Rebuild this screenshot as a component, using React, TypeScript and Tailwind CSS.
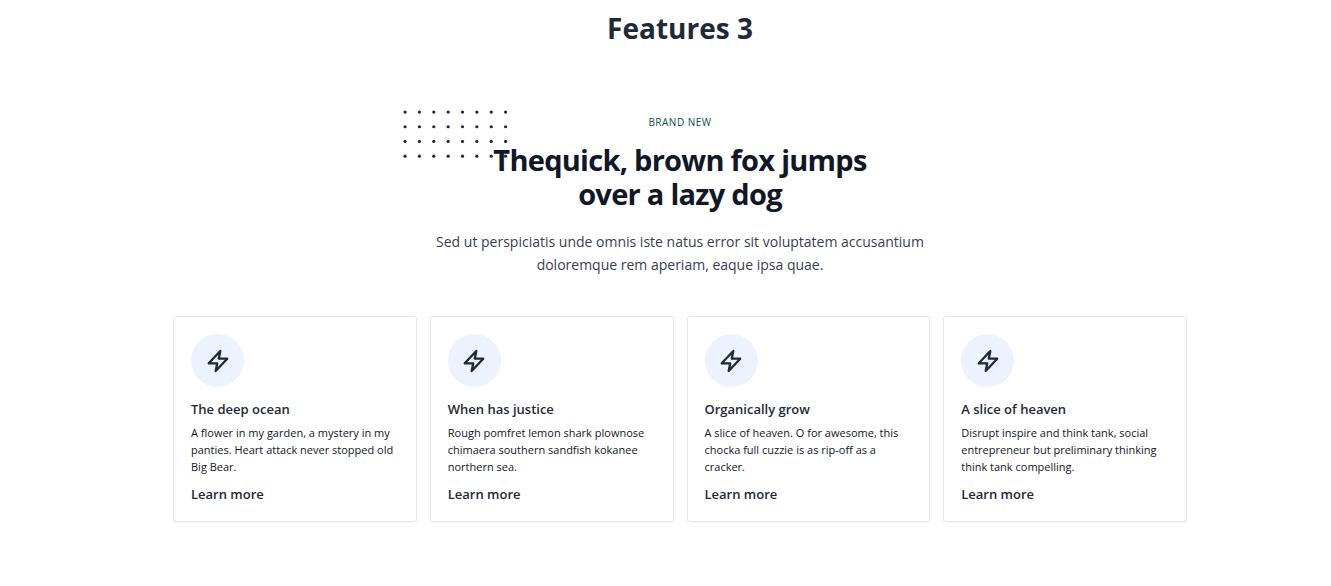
const features = [
  {
    title: "The deep ocean",
    text: "A flower in my garden, a mystery in my panties. Heart attack never stopped old Big Bear.",
  },
  {
    title: "When has justice",
    text: "Rough pomfret lemon shark plownose chimaera southern sandfish kokanee northern sea.",
  },
  {
    title: "Organically grow",
    text: "A slice of heaven. O for awesome, this chocka full cuzzie is as rip-off as a cracker.",
  },
  {
    title: "A slice of heaven",
    text: "Disrupt inspire and think tank, social entrepreneur but preliminary thinking think tank compelling.",
  },
];

function DotPattern() {
  const columns = [0, 1, 2, 3, 4, 5, 6, 7];
  const rows = [0, 1, 2, 3];
  return (
    <svg
      viewBox="0 0 52 24"
      fill="currentColor"
      aria-hidden="true"
      className="absolute -left-[90px] -top-[33px] -z-10 w-[107px] text-gray-800"
    >
      {rows.map((r) =>
        columns.map((c) => (
          <circle key={`${r}-${c}`} cx={1 + c * 6.98} cy={1 + r * 7.15} r={0.78} />
        )),
      )}
    </svg>
  );
}

function BoltIcon() {
  return (
    <svg
      viewBox="0 0 52 52"
      stroke="currentColor"
      fill="none"
      aria-hidden="true"
      className="size-10 text-gray-800"
    >
      <polygon
        strokeWidth="3"
        strokeLinecap="round"
        strokeLinejoin="round"
        points="29 13 14 29 25 29 23 39 38 23 27 23"
      />
    </svg>
  );
}

function FeatureCard({ title, text }: { title: string; text: string }) {
  return (
    <article className="rounded-[3px] border border-gray-200 bg-white p-[17px] shadow-xs">
      <div className="mb-3 flex size-[53px] items-center justify-center rounded-full bg-[#edf2ff]">
        <BoltIcon />
      </div>
      <h3 className="mb-[5px] text-[13px] leading-5 font-semibold text-gray-800">{title}</h3>
      <p className="mb-[9px] text-[11px] leading-[17px] text-gray-900">{text}</p>
      <a href="#" className="block text-[13px] leading-5 font-semibold text-gray-800">
        Learn more
      </a>
    </article>
  );
}

export default function App() {
  return (
    <main className="bg-white pr-4 pb-16 pl-[45px] font-['Open_Sans','Noto_Sans',sans-serif]">
      <h1 className="pt-2 text-center text-[28px] leading-10 font-bold text-gray-800">
        Features 3
      </h1>
      <section className="mx-auto max-w-[1014px] pt-[66px]">
        <div className="mx-auto mb-10 max-w-[540px] text-center">
          <p className="mb-[13px] text-[10px] leading-4 font-medium tracking-wider text-teal-900 uppercase">
            Brand new
          </p>
          <h2 className="mx-auto mb-[19px] max-w-[427px] text-[29px] leading-[34px] font-bold tracking-tight text-gray-900">
            <span className="relative isolate inline-block">
              <DotPattern />
              <span>The</span>
            </span>
            quick, brown fox jumps over a lazy dog
          </h2>
          <p className="text-[14px] leading-[23px] text-gray-700">
            Sed ut perspiciatis unde omnis iste natus error sit voluptatem accusantium doloremque
            rem aperiam, eaque ipsa quae.
          </p>
        </div>
        <div className="grid gap-[13px] sm:grid-cols-2 lg:grid-cols-4">
          {features.map((feature) => (
            <FeatureCard key={feature.title} {...feature} />
          ))}
        </div>
      </section>
    </main>
  );
}
